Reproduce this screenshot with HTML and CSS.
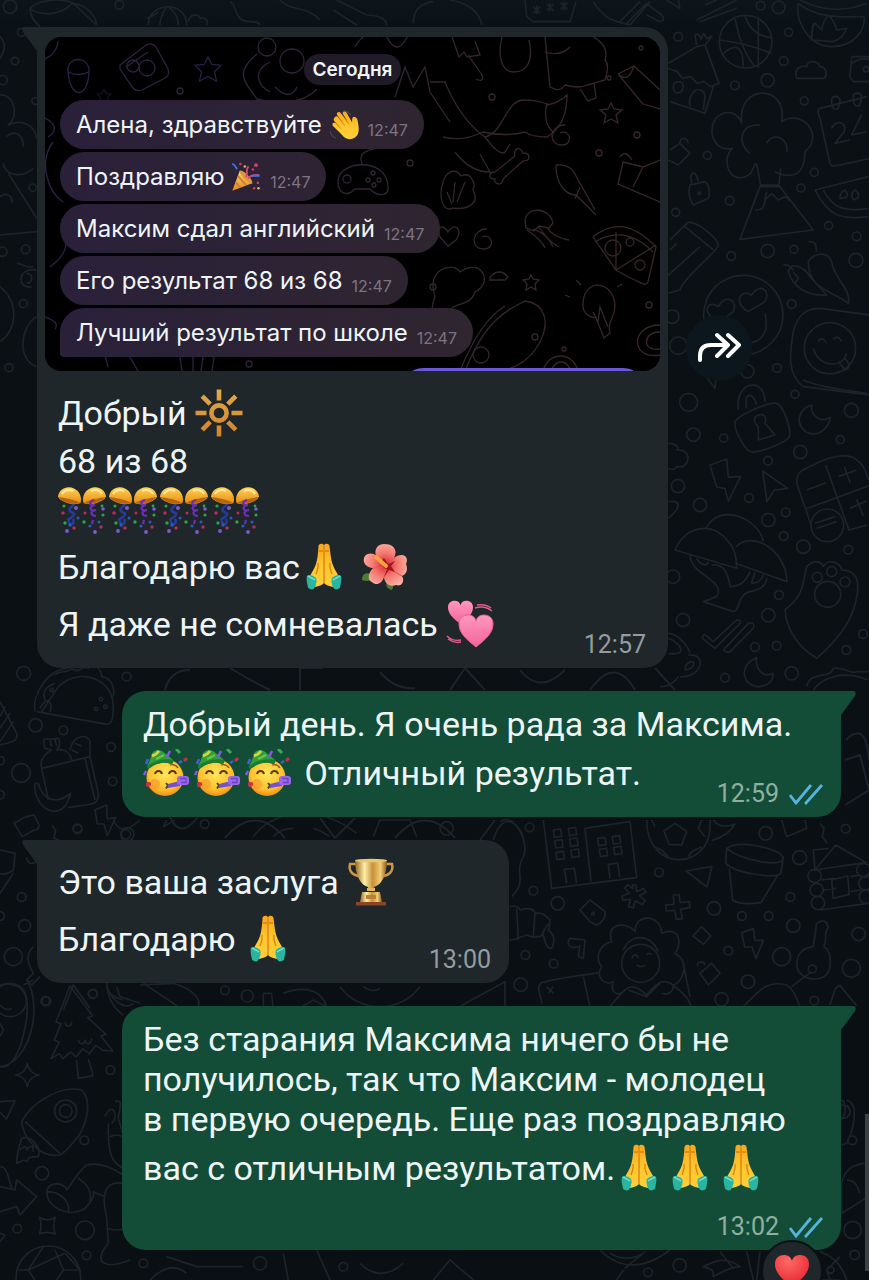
FILE: index.html
```html
<!DOCTYPE html>
<html lang="ru">
<head>
<meta charset="utf-8">
<meta name="viewport" content="width=device-width, initial-scale=1">
<title>Чат</title>
<link rel="stylesheet" href="styles.css">
</head>
<body>
<svg class="defs" aria-hidden="true">
  <defs>
    <linearGradient id="gold" x1="0" y1="0" x2="0" y2="1"><stop offset="0" stop-color="#ffd65c"/><stop offset="1" stop-color="#e8890c"/></linearGradient>
    <linearGradient id="skin" x1="0" y1="0" x2="0" y2="1"><stop offset="0" stop-color="#f9a61c"/><stop offset=".5" stop-color="#fdc62e"/><stop offset="1" stop-color="#ffcf3a"/></linearGradient>
    <radialGradient id="face" cx=".5" cy=".4" r=".6"><stop offset="0" stop-color="#ffe65a"/><stop offset=".7" stop-color="#fdc32f"/><stop offset="1" stop-color="#ee8f1c"/></radialGradient>
    <linearGradient id="cup" x1="0" x2="1"><stop offset="0" stop-color="#9a6420"/><stop offset=".3" stop-color="#fff0a8"/><stop offset=".55" stop-color="#c8913a"/><stop offset=".8" stop-color="#f0cd74"/><stop offset="1" stop-color="#8a5418"/></linearGradient>
    <linearGradient id="sunray" gradientUnits="userSpaceOnUse" x1="0" y1="0" x2="0" y2="48"><stop offset="0" stop-color="#e2ab4c"/><stop offset="1" stop-color="#d08328"/></linearGradient>
    <radialGradient id="petal" cx=".5" cy=".5" r=".55"><stop offset="0" stop-color="#d3222e"/><stop offset=".5" stop-color="#f5766e"/><stop offset="1" stop-color="#fbb0a2"/></radialGradient>
    <linearGradient id="pink" x1="0" y1="0" x2="0" y2="1"><stop offset="0" stop-color="#ff98bd"/><stop offset="1" stop-color="#f4649c"/></linearGradient>
    <radialGradient id="red" cx=".4" cy=".2" r=".8"><stop offset="0" stop-color="#ff6a66"/><stop offset="1" stop-color="#e5242f"/></radialGradient>

    <symbol id="e-sun" viewBox="0 0 48 48">
      <g fill="none" stroke="url(#sunray)" stroke-width="4.6"><circle cx="24" cy="24" r="7.6"/><path d="M24 .5v11M24.01 36.5v11M.5 24h11M36.5 24.01h11M7.2 7.2l8 8M32.8 32.8l8 8M40.8 7.2l-8 8M15.2 32.8l-8 8"/></g>
    </symbol>
    <symbol id="popper-half" viewBox="0 0 24 48">
      <path d="M0 10.500C1 3 9-1 16 2.500c6 3 8 9 6.500 14.500C17 20 3 17 0 10.500z" fill="url(#gold)"/>
      <path d="M.8 11C6 12 17 13.500 22 16.800 17 19.500 4 16.500 .8 11z" fill="#b5650d"/>
      <path d="M4 8c2-4 7-5 11-3" fill="none" stroke="#ffe89a" stroke-width="2"/>
    </symbol>
    <symbol id="e-popper" viewBox="0 0 48 48">
      <path d="M14 17c4 3-5 5-2 8s6 1 3 5-6 1-4 6 6 1 4-3" fill="none" stroke="#243c98" stroke-width="2.600"/>
      <use href="#popper-half" width="24" height="48"/>
      <use href="#popper-half" width="24" height="48" transform="matrix(-1 0 0 1 48 0)"/>
      <path d="M36 14c-6 2-4 6 1 5-7 1-5 7 1 5-7 1-5 6 0 6M35 34l-1 4" fill="none" stroke="#6a2fb8" stroke-width="2.200"/>
      <g fill="#2ea34a"><circle cx="6" cy="20" r="1.600"/><circle cx="7" cy="37" r="1.700"/><circle cx="26" cy="36" r="1.700"/><circle cx="45" cy="29" r="1.600"/><circle cx="44" cy="20" r="1.400"/></g>
      <g fill="#b92a5b"><circle cx="5" cy="27" r="1.800"/><circle cx="16" cy="42" r="1.700"/><circle cx="27" cy="27" r="1.500"/><circle cx="43" cy="41" r="1.700"/></g>
      <g fill="#7d5ad6"><circle cx="9" cy="45" r="1.900"/><circle cx="18" cy="22" r="2"/><circle cx="37" cy="46" r="1.900"/><circle cx="45" cy="23" r="1.800"/></g>
      <g fill="#2f55c8"><circle cx="12" cy="39" r="1.700"/><circle cx="20" cy="32" r="1.500"/><circle cx="32" cy="40" r="1.600"/><circle cx="41" cy="36" r="1.500"/></g>
    </symbol>
    <symbol id="e-pray" viewBox="0 0 48 48">
      <path d="M18.500 3c.5-3 5-3 5.500-.5.500-2.500 5-2.500 5.500.5 1 8 1.500 13 3 18 1.500 4.500 4 8 6 12L33 44c-4-1-7-1.500-9-4-2 2.500-5 3-9 4l-5-11c2-4 4.500-7.500 6-12 1.500-5 2-10 2.500-18z" fill="url(#skin)"/>
      <path d="M24 3v37M19 8h4M25 8h4M18 20c1 5-1 8-2 11M30 20c-1 5 1 8 2 11" fill="none" stroke="#d98010" stroke-width="1.300"/>
      <path d="M8 32.500c1-1.500 8 1 8.500 3.500.5 4-1 8-3 10-1.500 1-5 0-5.500-1.500-.8-4-2-8-1-12z" fill="#2ab5a0"/>
      <path d="M40 32.500c-1-1.500-8 1-8.500 3.500-.5 4 1 8 3 10 1.500 1 5 0 5.500-1.500.8-4 2-8 1-12z" fill="#2ab5a0"/>
      <path d="M8 33c3 2 5 2 7 4M40 33c-3 2-5 2-7 4" fill="none" stroke="#7be0cd" stroke-width="1.500"/>
    </symbol>
    <symbol id="e-flower" viewBox="0 0 48 48">
      <path d="M2 37C2 29 8 29 15 32c0 6-8 7-13 5zM27 39c5-2 8 3 5 8-4-1-7-3-5-8z" fill="#4d7a35"/>
      <path d="M22 20C12 14 14 1 24 1s14 6 10 14C40 9 50 12 46 21c2 5 1 10-4 12 3 5 0 11-6 9-5 2-11 0-12-8-2 7-8 9-12 5-5-2-4-9 1-14C4 24 2 17 5 13c5-5 13-2 17 7z" fill="url(#petal)"/>
      <path d="M33 15l-5 8M42 33l-12-7M24 34l3-8M13 25l11-1M22 20l3 3" stroke="#e25a58" stroke-width="1.200"/>
      <path d="M27 26C21 25 20 18 24 15l4 6 7-3-4 5 4 6-6-2-5 7z" fill="#a31523"/>
      <path d="M26 23L16 14" stroke="#f5a33c" stroke-width="4" stroke-linecap="round"/>
    </symbol>
    <symbol id="heart" viewBox="0 0 36 34"><path d="M18 33C8 25 1 19 1 10 1 4 5 1 10 1c4 0 7 2 8 6 1-4 4-6 8-6 5 0 9 3 9 9 0 9-7 15-17 23z"/></symbol>
    <symbol id="e-hearts" viewBox="0 0 48 48">
      <use href="#heart" x="0" y="0" width="29" height="25" fill="url(#pink)"/>
      <use href="#heart" x="12" y="14" width="36" height="34" fill="url(#pink)" stroke="#ef5e95"/>
      <path d="M29 8c6-2 12-1 17 3M31 5c6-1 10 0 14 3M1 36c4 4 9 5 14 4M2 39c4 3 9 4 13 3" fill="none" stroke="#e6588c" stroke-width="1.400"/>
    </symbol>
    <symbol id="e-party" viewBox="0 0 48 48">
      <circle cx="22" cy="28.500" r="18.500" fill="url(#face)"/>
      <path d="M4 17C7 13 8 6 10 3c4-3 7-2 9-1 4 3 8 6 11 9 1 3-1 4-2 4-8-3-16 0-21 4-2 1-3 0-3-2z" fill="#2f9e3c"/><path d="M4 17c7-5 16-8 26-6 1 3-1 4-2 4-8-3-16 0-21 4-2 1-3 0-3-2z" fill="#1e7a30"/>
      <path d="M9 7c3-1 5-2 7-5" fill="none" stroke="#d9d43c" stroke-width="3"/><path d="M13 10l8-4" stroke="#68c64a" stroke-width="2"/>
      <path d="M12 25c1-4 6-4 7 0M26 25c1-4 6-4 7 0" fill="none" stroke="#5b3514" stroke-width="2"/><path d="M27 16c3-1 6 0 8 3" fill="none" stroke="#8a4f14" stroke-width="1.300"/>
      <circle cx="12" cy="35" r="5" fill="#f58b2a" opacity=".5"/><path d="M23 34l2 2.500-2 3" fill="none" stroke="#4d4a20" stroke-width="2"/>
      <path d="M25 35l12-3v5l-12 2z" fill="#7351d0"/><rect x="34" y="27" width="12" height="9" rx="3" fill="#9a68e8"/><path d="M37 29.500h6v4h-5" fill="none" stroke="#7040c4" stroke-width="1.300"/>
      <path d="M24 8l3-6" stroke="#8557e6" stroke-width="2.600"/><path d="M33 0l4 4" stroke="#34ae4b" stroke-width="3"/>
      <path d="M41 12l3-3M3 35h5M5 33v5" stroke="#c63240" stroke-width="3"/><path d="M3 15l2-5M36 14l3-2" stroke="#3f61d8" stroke-width="2.600"/><path d="M1 26l2-4" stroke="#8557e6" stroke-width="2.400"/>
    </symbol>
    <symbol id="e-trophy" viewBox="0 0 48 48">
      <path d="M9 6H3c-2 8 4 12 11 12M39 6h6c2 8-4 12-11 12" fill="none" stroke="#c99948" stroke-width="2.500"/>
      <path d="M8 2h32c0 14-5 25-13 27l-1 4h-4l-1-4C13 27 8 16 8 2z" fill="url(#cup)"/>
      <ellipse cx="24" cy="2.500" rx="16" ry="1.800" fill="#e8c878"/><rect x="20" y="30" width="8" height="3" fill="#e4b95e"/>
      <path d="M15 34h18l2 10H13z" fill="url(#cup)"/><path d="M19 37h10v4H19z" fill="#b9803a"/><path d="M9 44h30v3.500H9z" fill="#8c4423"/>
    </symbol>
    <symbol id="e-wave" viewBox="0 0 48 48">
      <path d="M9 12c2-3 5-2 7 1l7 8L13 8c-2-4 3-7 6-3l12 15-9-14c-1-4 4-6 6-2l9 16c0-5 0-10 4-9 5 1 5 6 6 13 2 12-1 20-10 22-7 2-12-1-16-6L6 25c-2-4 2-6 5-4l6 6L8 17c-1-2 0-4 1-5z" fill="url(#skin)"/>
      <path d="M16 13l9 12M24 12l8 11M11 21l8 9" stroke="#d8840f" stroke-width="1.500"/>
      <path d="M2 34c1 6 4 9 9 11M24 1c5 1 8 3 11 7" fill="none" stroke="#484852" stroke-width="2"/>
    </symbol>
    <symbol id="e-tada" viewBox="0 0 48 48">
      <path d="M2 46L14 14c9 4 16 12 20 20z" fill="url(#gold)"/><path d="M11 22l13 15M7 32l8 9" stroke="#c67a50" stroke-width="3"/><ellipse cx="24" cy="24" rx="4" ry="14" transform="rotate(-45 24 24)" fill="#d79a38"/>
      <path d="M24 24c4-6-2-10 4-17M27 26c5-5 9-6 18-5" fill="none" stroke="#d44673" stroke-width="3"/><path d="M2 3c6 2 4 5 8 8M34 22h12" fill="none" stroke="#4074dc" stroke-width="3"/>
      <g fill="#d43d63"><circle cx="15" cy="3" r="2"/><circle cx="40" cy="5" r="3"/><circle cx="43" cy="33" r="2"/><circle cx="37" cy="42" r="2"/><circle cx="35" cy="12" r="2"/></g><g fill="#e8b53b"><circle cx="22" cy="7" r="2"/><circle cx="44" cy="42" r="2"/></g>
    </symbol>
    <symbol id="ticks" viewBox="0 0 34 22"><path d="M1 12l6 8L22 2M16 19l1 1L33 2" fill="none" stroke="#55b4dc" stroke-width="2.800"/></symbol>
    <symbol id="star" viewBox="-16 -16 32 32"><path d="M0-13l4 8 10 1-7 7 2 10-9-5-9 5 2-10-7-7 10-1z"/></symbol>
  </defs>
</svg>

<main class="chat">
  <svg class="wallpaper" viewBox="0 0 869 1280" preserveAspectRatio="xMidYMin slice" aria-hidden="true">
    <!-- top left -->
    <g transform="scale(.3333)">
      <path d="M90 25c30-30 100-30 130-15l70 65M90 25c0 30 20 45 30 55M90 25c30 25 100 20 125-15M215 10c30 0 70 25 75 65"/>
      <path d="M445 75c0-70 115-75 115 0M500 20c-10 15-20 35-20 55M505 20c20 15 30 35 30 55M440 55c20-10 30-10 35-20M565 65c5-25 30-25 35-10 20-5 25 10 20 20M690 5c20 10 10 30 30 50s50 0 60 20M840 0c30 35 80 15 120 60M1000 30l70 45M1010 0l90 45c50 0 60 20 60 30M1240 70c0-40 20-60 60-65"/>
      <path d="M0 110c20 20 15 50-5 70M0 285c40-5 60 60 25 90 40-20 80 0 85 40M20 410c30-25 50 0 50 30M10 490c0 30 50 50 90 15M25 520l85 135M0 705l110-10M0 590c20-15 40 0 35 20M50 790c20 0 20 15 50 10M110 810c-60-10-60 60-15 50M80 820c20 0 20 30 0 30M0 860c60 50 50 130 0 165M110 950c-50 30-60 130 0 150"/>
      <circle cx="30" cy="20" r="20"/><circle cx="358" cy="14" r="13"/><circle cx="64" cy="97" r="12"/><circle cx="45" cy="183" r="11"/><circle cx="8" cy="240" r="14"/><circle cx="106" cy="303" r="10"/><circle cx="98" cy="563" r="11"/><circle cx="77" cy="748" r="13"/><circle cx="7" cy="755" r="14"/><circle cx="70" cy="911" r="12"/><circle cx="27" cy="1103" r="12"/>
    </g>
    <!-- top right -->
    <g transform="translate(430) scale(.3333)">
      <path d="M60 0c60 10 90 40 95 75M285 0l5 50 20 15h110l18-60M490 5c30 50 60 60 110 70l60-70M570 65L630 5M590 70l60-60 45 35c15 15-5 25-15 15l-30-15M710 0l40 25-5-25M800 60L920 0M810 65l110-40M825 15L860 0M310 20l20 20m0-20l-20 20m10-24v28M350 12l20 20m0-20l-20 20m10-24v28M392 8l20 20m0-20l-20 20m10-24v28"/>
      <path d="M870 120q80 10 155 40M915 55q20 100 60 145M945 48q20 60 80 65M880 160q60-50 60 40M985 205l0-155"/>
      <circle cx="947" cy="125" r="79"/>
      <path d="M1105 10c-10 50 30 130 100 130s100-50 98-90M1105 10c60 50 150 40 198 40M1110 0q100 50 200 10M1145 120c0-30 5-50 10-50l20 20q5-30 20-45 20 20 25 45l30-5q-10 30-40 40z"/>
      <path d="M715 190l85-50 25-5 42 115-25 10-20-15-20 5-20-20-25 5-15-20-30-10M720 305l105 35 25-80M730 260c0-20 30-20 30 0s-30 30-30 0M780 320c-10-50 40-70 45-30l-5 40M800 135l-5-30c20-10 15 20 20 10l5-15 10 15 15-5-20 25"/>
      <path d="M1100 235c-10-30 15-40 30-35 0-20 35-20 40 0 20 0 25 30 10 35zM1265 170h55M1265 170l-5 60 10 15h50M1265 190q30-20 55-10"/><circle cx="1308" cy="208" r="8"/>
      <path d="M935 370c-15-120 140-120 120-5 60-40 130 40 70 90 0 80-50 80-90 60M935 370c-20-60-100-30-88 35 10 40 40 45 60 40-40 40 0 120 55 75l15-30M960 460c-40-30-30-90 30-85M1010 430c20-40 70-10 60 25M980 490l12 65h55l5-50M990 560h60l100 130-220 28zM1010 575c-10 40 0 55-35 55M1005 600l20-20 20 20 20-10 25 20"/>
      <path d="M1310 290l-140 35c-10 5-5 15 0 30l30 135c5 15 20 5 30 5l90-20M1205 300c0-15 25-15 25 5l-5 20c-15 10-20-5-20-25zM1270 290c0-15 25-15 25 5l-5 20c-15 10-20-5-20-25zM1205 385c15-35 60-10 30 20l-20 25 45-10M1295 345l-30 60 45-10M1155 570l160-40M1155 570c40 80 80 90 160 80M1180 570c30 60 70 65 135 55M1230 595q0-20 15-25 20 25-15 25zM1270 600q-10-20 5-30 25 20-5 30z"/>
      <path d="M720 450l30-20 30 30-35 35-30-15M750 430c0-20 20-20 25 0M780 555l45-10c15 10 15 40 10 50l-45 20c-15-20-15-40-10-60zM785 550c-10-40 15-40 20-5"/><circle cx="808" cy="580" r="4"/>
      <path d="M720 720l50-50c20-15 90 40 95 65 0 20-100 90-115 135l-35 10M765 680l85 70M720 750l20-20M810 740l-100 90"/>
      <circle cx="940" cy="945" r="119"/><path d="M870 965c-60-20-40-70-5-45 20-40 60-20 45 15zM955 935c-50-30-20-70 10-50 20-35 60-20 40 20zM1005 940c15 70-20 95-70 85"/>
      <path d="M1075 815c10-35 50-10 65 15l50 55c-50 5-100-20-115-70zM1135 785c20-30 60-30 70 0 5 50 60 80 50 125-50-40-120-40-120-125zM1060 795c20-5 20 10 30 15M1135 725c30 0 20 15 25 30M1090 815l15 20-10 15"/>
      <path d="M1320 945l-150-20c-50 0-70 30-80 70-10 60-20 130 30 165l200 25"/><circle cx="1200" cy="1045" r="77"/><path d="M1150 1045c15 60 90 60 100 15M1165 1025q10-20 25 5M1210 1020q10-20 25 5M1225 1085l20 25c20-5 10-25 0-35M820 1120l35 45 5-45"/>
      <circle cx="745" cy="110" r="13"/><circle cx="992" cy="17" r="13"/><circle cx="1046" cy="22" r="19"/><circle cx="1076" cy="97" r="12"/><circle cx="1061" cy="183" r="13"/><circle cx="1013" cy="241" r="20"/><circle cx="915" cy="256" r="13"/><circle cx="1123" cy="303" r="12"/><circle cx="832" cy="466" r="12"/><circle cx="899" cy="602" r="13"/><circle cx="1153" cy="517" r="12"/><circle cx="1113" cy="564" r="12"/><circle cx="737" cy="637" r="12"/><circle cx="1196" cy="677" r="12"/><circle cx="1280" cy="709" r="13"/><circle cx="1013" cy="753" r="20"/><circle cx="1092" cy="748" r="12"/><circle cx="904" cy="768" r="13"/><circle cx="1278" cy="781" r="21"/><circle cx="1085" cy="912" r="13"/><circle cx="727" cy="950" r="20"/><circle cx="745" cy="1037" r="26"/><circle cx="952" cy="1114" r="20"/><circle cx="1041" cy="1104" r="13"/>
    </g>
    <!-- right middle -->
    <g transform="translate(660 380) scale(.3333)">
      <path d="M225 130c-5-20 100-65 125-60 20 5 45 80 38 100-10 20-95 50-115 45-20-5-50-65-48-85zM235 90c-10-90 80-100 80-25M260 85c-10-50 20-50 30-10M295 140c-40-35 35-55 20-10l30 35-50 15zM430 0q40 20 190 40M455 75c-60 20-40 85 5 87 30 0 50-30 50-50-30 20-60-10-55-37z"/>
      <path d="M150 255l50-18 5 55 37-3-37 75-10-38-25-5zM308 273l75 52-40 5-22 35zM25 190c25 0 35 15 25 20 50-5 40 60 0 50-5 10-15 10-25 5M25 365c40-5 40 15 0 50"/>
      <path d="M410 310c0-40 20-40 60-60 50-25 100-30 120-10 20 10 30 40 35 60M410 310l45 130M435 388l190-70M497 255l70 195 55-15M440 330l58-22M535 290l55-20M553 260l18 50M570 385l50-22M590 358l20 50M465 430l60-20M470 445l60-20"/><circle cx="502" cy="436" r="49"/>
      <path d="M45 510c30-70 110-90 160-25 20 20 25 50 25 80zM138 445c40-80 160-30 172 40M228 500c50-50 150 10 153 105l-155-55M90 525c0 60 110 75 80 125l-40 15 90 30c20 0 10-50 50-60 30-5 50-20 50-40M110 535c10 20 30 25 35 10M155 555c40-5 50 30 55 65 30 0 50-20 60-45M275 610l10-35M275 610c20 0 30-10 35-25M130 765c10-5 15 10 30 20l70-65c20 0 10 15-5 25l-60 60-38-30zM195 805l70-75c20-5 20 10 10 20l-65 65c-15 5-20-5-15-10z"/>
      <path d="M440 560c20-20 40-20 50 0 15-25 50-15 55 10 60 0 55 60 35 120-20 60-70 110-110 145-50-30-90-80-95-145 60-50 50-70 65-130z"/><circle cx="503" cy="643" r="39"/><circle cx="472" cy="592" r="15"/><circle cx="515" cy="575" r="15"/><circle cx="555" cy="606" r="15"/>
      <path d="M25 760c30 0 60 40 65 60M25 820c60 10 40-30 0-45M85 825c60-5 40 70-25 65M75 870c0-20 10-25 25-25 5 10-5 25-25 25zM0 920c30 0 50-20 55-30M290 833c-60 25-40 90 10 87 30-5 40-20 40-40-30 15-55-10-50-47zM440 920c10-50 70-20 80-55 40-5 50 20 70 10l40 0M460 930c30-40 90-60 165-30"/>
      <circle cx="86" cy="67" r="27"/><circle cx="100" cy="164" r="20"/><circle cx="191" cy="174" r="12"/><circle cx="405" cy="43" r="12"/><circle cx="574" cy="91" r="21"/><circle cx="541" cy="179" r="12"/><circle cx="421" cy="216" r="20"/><circle cx="324" cy="242" r="13"/><circle cx="54" cy="318" r="20"/><circle cx="120" cy="375" r="20"/><circle cx="267" cy="354" r="13"/><circle cx="325" cy="420" r="20"/><circle cx="377" cy="397" r="13"/><circle cx="371" cy="468" r="13"/><circle cx="430" cy="500" r="20"/><circle cx="565" cy="509" r="13"/><circle cx="39" cy="590" r="20"/><circle cx="357" cy="645" r="13"/><circle cx="69" cy="720" r="20"/><circle cx="325" cy="706" r="20"/><circle cx="285" cy="801" r="13"/><circle cx="350" cy="797" r="13"/><circle cx="609" cy="762" r="13"/><circle cx="559" cy="810" r="13"/><circle cx="395" cy="880" r="20"/><circle cx="195" cy="893" r="13"/>
    </g>
    <!-- between the sent bubbles -->
    <g transform="translate(500 820) scale(.3333)">
      <path d="M130 0l25 205 255-32L390 5l-135 20 18 160M200 190l-7-42 30-3 7 45M330 175l-5-42 28-4 6 42M160 30l22-3 3 22-22 3zM205 25l22-3 3 22-22 3zM164 62l22-3 3 22-22 3zM209 57l22-3 3 22-22 3zM168 97l22-3 3 22-22 3zM213 90l22-3 3 22-22 3zM293 55l22-3 3 22-22 3zM337 50l22-3 3 22-22 3zM298 88l22-3 3 22-22 3zM341 82l22-3 3 22-22 3zM0 5c40-30 90 60 70 105-30 50 15 70-35 120"/>
      <path d="M440 0c0 160 190 150 190 20l0-20M525 10l35 25-15 40-38-2-15-40zM455 0l10 20M460 80l25 10 20 20M565 110l10-15 30-15M605 0l-10 25 20 25M640 0q20 30 65 12-20 35-70 50"/>
      <path d="M680 85c40-30 170 5 170 30 0 30-130 5-170-30zM680 85l-3 45c30 30 140 45 165 32l8-47M688 145l10 95c20 15 70 10 85 8l50-82M845 0l15 50 60-25-5-25M960 10l12 15-5 25 15 20M940 90l5 60 62-75 95 55M940 90l45-5M945 150l150-22M960 270l145-20M965 180l40-5M968 210l40-5M995 180l48-12 5 55-48 12zM1050 170l30-5M1052 215l30-5"/>
      <circle cx="944" cy="168" r="20"/><circle cx="950" cy="210" r="20"/><circle cx="954" cy="249" r="20"/><circle cx="1090" cy="150" r="20"/><circle cx="1096" cy="190" r="20"/><circle cx="1098" cy="230" r="20"/>
      <path d="M558 153l78-14-15 62zM398 195l10 0 2 20 20-10 8 12-20 10 18 15-10 12-20-12-6 22-14-4 5-22-22 3-3-13 22-8-14-16 10-10 14 12zM520 225l18 0 2 22 28-2 2 18-28 5 5 28-18 2-5-27-25 2-2-18 25-2zM240 270l30-30 45 35c5 15-10 35-25 40l-20-10zM605 320l28 28-22 25-32-25zM725 338l35-12 5 35 25 0-22 55-12-35-22 0zM600 460l35-30 25 30-35 35zM595 440c-10-15 15-20 20-5"/><circle cx="279" cy="281" r="4"/>
      <path d="M30 260c20-5 25 0 30 10 30-10 40 0 48 10 20-5 30 10 42 20 0 20-5 30-5 30 20 15 20 35 10 55-20 0-20-25-25-40-20 10-40 5-50 0-20 5-30 15-50 15M50 265l5 95M105 280l-5 70M145 310l-20 35M255 360l-45-5c-10 15-5 25 10 28l15-3M255 360l-5 55-15-5 5-35"/>
      <path d="M335 365c-20-60 50-60 70-30 0-60 80-50 80 5 60-25 60 40 40 60 50 30 20 90-5 95 0 25-20 30-35 25M335 365c-40 10-50 50-30 75-20 30 10 60 35 45-10 30 10 45 30 30M370 390c20-50 80-50 105 5M330 560c50-60 60-80 110-35 40-50 60-50 90-20 30 20 40 40 45 60M385 510l55 20 40-40M550 430l20 100M295 458c-60 10-120 15-170 30-20 10 0 40 0 65M250 470l20 90M140 500l20 20m0-20l-15 20M410 435q15 10 25 0M395 415q10-20 20-2M440 405q10-10 15 0"/><circle cx="422" cy="430" r="57"/>
      <path d="M940 380l10-70c20-15 30-5 35 10l-8 20 0 20-5 20c30 20 20 80 0 90-30 15-70 5-80-25-5-40 10-60 48-65zM935 455l-60 45M730 560c50-50 70-80 130-65 20 10 35 50 40 65M990 555c10-30 15-60 30-58l50 60"/><circle cx="937" cy="447" r="12"/>
      <circle cx="89" cy="22" r="13"/><circle cx="797" cy="40" r="20"/><circle cx="1037" cy="26" r="13"/><circle cx="477" cy="157" r="13"/><circle cx="100" cy="212" r="13"/><circle cx="173" cy="250" r="20"/><circle cx="642" cy="265" r="20"/><circle cx="871" cy="231" r="13"/><circle cx="726" cy="288" r="13"/><circle cx="806" cy="288" r="13"/><circle cx="880" cy="317" r="20"/><circle cx="1076" cy="342" r="20"/><circle cx="685" cy="392" r="13"/><circle cx="845" cy="410" r="27"/><circle cx="1054" cy="445" r="27"/><circle cx="76" cy="405" r="13"/><circle cx="161" cy="431" r="13"/><circle cx="62" cy="494" r="20"/><circle cx="744" cy="485" r="20"/><circle cx="899" cy="113" r="21"/><circle cx="665" cy="538" r="20"/><circle cx="943" cy="542" r="13"/>
    </g>
    <!-- left middle -->
    <g transform="translate(0 660) scale(.3333)">
      <path d="M105 155c-10-50 40-130 100-130M110 155l210 38c20 0 20-30 20-60-10-100-140-110-180-30l-35 52M165 45c20-20 35 0 50-20 20 20 30-10 50 0 10-20 40 0 40 25 30 5 40 30 35 60M120 145c20-40 40-20 30 10M135 120c-10-30 5-40 30-50M0 125l50 95c5 20-5 25-50 35M0 170l15-30M0 205l30-45M0 245l40-60"/>
      <circle cx="155" cy="90" r="5"/><circle cx="303" cy="118" r="5"/><circle cx="288" cy="146" r="5"/><circle cx="316" cy="140" r="5"/>
      <path d="M125 325c-10-30 20-50 30-55l-20-5c-10-30 0-30 15-28l25-2c10 20 0 30-5 35 30-5 40 10 45 30M125 325l145-35 25 110c0 30-10 30-40 35l-50 8M125 325l20 95M210 270c10-50 60-50 60-20v40M215 270l20 10M225 250l20 8M255 295l30 125M105 370c-10 70 80 130 105 35 0 0 5-10-5 0-40 30-80 10-90-35zM150 240l5 20M165 238l5 20M42 490l35-20 5 0 20-5 15 30c0 10-5 15-15 15l-35 20zM155 495l12 15-5 25 15 5M285 450l35-15 2 42 25-5-25 55-10-35-20 0z"/>
      <circle cx="71" cy="40" r="21"/><circle cx="107" cy="196" r="20"/><circle cx="190" cy="211" r="13"/><circle cx="333" cy="261" r="13"/><circle cx="63" cy="339" r="28"/><circle cx="0" cy="302" r="13"/><circle cx="338" cy="364" r="13"/><circle cx="0" cy="404" r="13"/><circle cx="233" cy="507" r="13"/><circle cx="380" cy="50" r="13"/><circle cx="378" cy="523" r="14"/>
    </g>
    <g transform="translate(0 820) scale(.3333)">
      <path d="M0 90l45 10-5 50q-20 15-40 12M40 160L0 220M80 110c0 20 15 25 30 15M100 380c-30 30-10 60 0 80l-20 20 15 15 25-25M190 570l30-75 50 70M320 500c20 50 60 70 80 50M350 500l10 30 60 20M420 495l100-5c130 40 70 120 0 60l-90-60M340 0c10 20 25 50 80-0M500 0l-10 20 35-20M760 50c50-70 180-110 310-10M820 50q20-25 60-25M940 25q20 5 50 25M1120 50l20-50h90l20 50M1480 60c30-100 80-40 90-10M790 570v-50h25l5 50M850 520c50-20 110-20 130 40l-40-20-50 30M1020 500c60 80 180 80 240 0M1090 500q30 20 50 5M1370 565l145-80v80"/>
      <circle cx="65" cy="231" r="13"/><circle cx="74" cy="317" r="18"/><circle cx="0" cy="288" r="13"/><circle cx="40" cy="410" r="27"/><circle cx="30" cy="540" r="50"/><circle cx="278" cy="522" r="13"/><circle cx="136" cy="543" r="13"/><circle cx="675" cy="511" r="13"/><circle cx="742" cy="528" r="18"/><circle cx="232" cy="25" r="13"/><circle cx="382" cy="43" r="20"/><circle cx="614" cy="12" r="13"/><circle cx="1340" cy="25" r="20"/>
    </g>
    <!-- lower left -->
    <g transform="translate(0 980) scale(.3333)">
      <path d="M0 15c100-20 90 80 65 170-20 60-40 80-65 75M80 0c50 80 10 250-80 260M70 15l30-15M0 75q20 20 35 10M0 130l10 20-10 20M210 18l68 90-15 5 55 50-15 5 35 45-30-2-20-15-20 25-20-15-20 25-15-15-25 20-10-15-25 15 25-50-15-5 20-50-15-5zM230 240l5 55 45-8-15-50M195 125c0 20 20 15 20 0M235 180c5 20 20 10 20 0 5 20 20 10 20-5M82 250q5 30 35 35-30 5-35 35-5-30-35-35 30-5 35-35zM0 365l45-3-25 55-20-20"/>
      <path d="M65 425c30-60 120-110 180-95 30 30 20 90-10 140-20 20-30 40-55 55-60 10-110-50-115-100zM75 425l105 95M65 475c30-10 60 30 50 55-20 0-30 0-35 15-10-10-15 0-30 5 0-30 10-60 15-75zM60 510q20-20 20 0 20-25 20 5"/><circle cx="197" cy="393" r="33"/><circle cx="197" cy="393" r="19"/>
      <path d="M0 620l45 10 5-30 60 50-50 55-10-25-50 15M0 560c20 0 25 30 35 65M140 635c10-40 60-20 60-5 10-10 30-50 60-75 40-10 80 10 110 30M140 635c0 50 70 80 115 50 20-20 30-40 25-50l35 15M235 595c30 20 40 40 35 70M140 635c50 0 70 35 65 65M345 365c30-10 10 30 10 50l15 50M315 410c20-50 45 0 20 20M325 430c0 60-5 130 65 140M330 470q20-10 40 0M370 610c-60-10-65 40-50 100l5 80c-50 60-10 80 65 50M320 745q30 10 60 0M118 712q25 15 48 0-10 25 0 50-25-10-48 0 10-25 0-50zM0 760l15 5-15 20"/>
      <circle cx="145" cy="895" r="97"/><path d="M50 870l35 0 45-70M85 870l110-50M85 870l20 30M195 820l45 50-50 0-20 30M190 870l-25-60"/>
      <circle cx="139" cy="63" r="13"/><circle cx="279" cy="41" r="13"/><circle cx="331" cy="270" r="13"/><circle cx="253" cy="481" r="13"/><circle cx="126" cy="580" r="20"/><circle cx="255" cy="751" r="28"/><circle cx="52" cy="746" r="13"/><circle cx="260" cy="826" r="13"/><path d="M320 0q0 70 50 105M370 60q-40-10-45-30M500 830l90 30 140 0M450 900q60-60 110-20M850 820l15 80M950 810l40 90M1080 850q60 60 130 0M1300 900l50-60 70 60"/><circle cx="430" cy="850" r="13"/><circle cx="780" cy="850" r="20"/><circle cx="1030" cy="860" r="13"/>
    </g>
    <!-- lower right -->
    <g transform="translate(600 1100) scale(.3333)">
      <path d="M740 0c40 10 20 90 0 130l-15 5M720 60c20-10 20-50 5-60M805 190c-50 0-70 20-80 60l0 90 80-50M740 240c20 0 30 10 40 40M0 450c60 60 130 60 210 0M30 460q50 30 100 0M70 510l-20 30M75 505c20-20 40-30 60-50M310 500c40-20 70-30 110 0-30 0-60 20-80 30 0-20 0-20-30-30zM360 455l40 50M440 455l20 85M480 455l-10 85M660 455q60 20 80 85M690 540l-10-30 40-40M620 540h100"/>
      <circle cx="730" cy="35" r="20"/><circle cx="757" cy="121" r="13"/><circle cx="758" cy="390" r="26"/><circle cx="764" cy="465" r="14"/><circle cx="239" cy="496" r="20"/><circle cx="144" cy="517" r="13"/><circle cx="692" cy="510" r="10"/>
    </g>
    <!-- strips between bubbles -->
    <path d="M165 690q5-20 25-20M230 668q25 15 40 22M300 690v-22h22M380 672q15 18 35 16M450 690l15-22 20 22M520 670q20 25 45 0M590 690q25-35 45 0M655 668l20 22M846 740q20-20 23 20M845 760l15-5 9 35-24 15"/>
    <path d="M170 817q10 23 28 0M225 838q30-35 60 0M320 818l15 20 20-20M395 838q30-35 60 0M480 840l15-20"/>
  </svg>

  <section class="row row-in">
    <article class="bubble bubble-in bubble-media">
      <svg class="tail" viewBox="0 0 32 24" aria-hidden="true"><path d="M3 0H32V24H15L1 5Q-1 0 3 0z" fill="#1f272a"/></svg>
      <div class="shot">
        <svg class="shot-bg" viewBox="0 0 615 334" preserveAspectRatio="xMidYMid slice" aria-hidden="true">
          <defs><linearGradient id="ink" gradientUnits="userSpaceOnUse" x1="0" y1="180" x2="615" y2="120"><stop offset="0" stop-color="#2b2149"/><stop offset=".45" stop-color="#302435"/><stop offset="1" stop-color="#382724"/></linearGradient></defs>
          <g fill="none" stroke="url(#ink)" stroke-width="1.300">
            <path d="M0 22q12-5 13-18M23 33c0-14 20-14 21 0 0 30-20 30-21 0zM23 35q10 5 21 0M75 28l26-20q6-3 10 2l12 22q2 6-3 9L97 53q-6 2-9-2L75 32zM81 30l22-15"/><circle cx="88" cy="29" r="6"/><circle cx="102" cy="31" r="8"/>
            <use href="#star" x="148" y="17" width="30" height="30"/><use href="#star" x="51" y="51" width="16" height="16"/>
            <circle cx="222" cy="10" r="9"/><circle cx="247" cy="24" r="12"/><path d="M212 17c-25 20-10 30 0 45q40 10 60-10M225 25c-20 10-10 25 0 30M230 50q15 15 22 0M310 10q10-18 22-10M342 0q10 20 20 0M350 60l10-30 8 20 12-20 5 25 20 30"/>
            <path d="M3 100q15-10-5-20M8 105c-15 20-5 50 10 60M5 230q20-15 15-30M0 280q15 5 10 12M125 320l12-20h35l-5 34M63 330l-5-20 20-2 15 26M135 320l2 14M148 320l0 14M158 320l-2 14"/>
            <path d="M293 144c0-20 48-25 50 5 2 12-12 10-18 3h-15c-8 8-17 5-17-8zM317 127q-5-12 12-15"/><circle cx="302" cy="142" r="4"/><circle cx="328" cy="136" r="2"/><circle cx="334" cy="143" r="2"/><circle cx="323" cy="143" r="2"/><circle cx="329" cy="148" r="2"/>
            <path d="M407 0l7 20 5-5 3 5 13-2-5-14M423 18l14 20q2 8-6 4M457 0c-5 20 0 35 12 35s20-10 15-32M500 0l5 50q10 6 15-2 15 4 22 0l18-5q5-15 0-20 5-15-15-25M535 52l8 12 8-3-2-15M500 15q15 5 25-5"/>
            <path d="M385 45h15c10 25 25 45 40 55 20-5 20-38 40-37 15 0 25 5 22 5q12-2 20-10 0 30-20 42-15 0-22-5-20 5-42 0-20 10-40 5M410 115q15 20 35 20l-10-18M440 100q15 20 20 15l5-8M502 66q-5 20 7 30"/>
            <path d="M573 37l16-8 26 24M573 37l25 30 17 5M573 37q10 10 16-8M450 135l20-16c-2-8 5-10 8-3 8 0 8 8 0 8l-20 18c0 8-10 5-8 0-8 0-6-7 0-7zM511 128c20-2 20 15 25 20l14 25M511 128c0 20 10 30 20 30l20 20M535 150l-5 12"/>
            <path d="M398 145c3-10 12-15 18-6 10-5 15 8 12 14 8 15-8 20-20 18-10 5-15-10-10-26zM402 155l5 12M410 145l-2 20M420 145l-8 20"/><path d="M578 125l20 5 17-7M578 125l-5 22 42 18M598 130l-10 20M575 120q5-8 12 3"/>
            <path d="M566 66l3 6 8 1-6 5 2 8-7-4-7 4 2-8-6-5 8-1zM486 238l2 4 6 1-4 4 1 6-5-3-5 3 1-6-4-4 6-1z"/>
            <path d="M480 183c3-15 25-12 28 3l-4 5-10-2-5 5-8-3zM482 193q15 10 18 18M488 192q15 5 20 18M494 190q10 15 20 20M502 190q5 10 22 13"/><path d="M548 200q30-25 63 10l-8 35c-3 5-5 1-20-5l-12-7-23-33M550 205q30-18 58 10M571 233v-38M571 233l40-25"/><circle cx="568" cy="211" r="8"/><circle cx="585" cy="205" r="4"/><circle cx="595" cy="228" r="5"/>
            <path d="M390 260c-10-30 20-35 25-25 20-15 35 10 15 20-5 15-20 10-25 18-5 12-25 10-15-13zM445 240q10-10 18 0l-3 3h-15zM395 200c-5-12 5-12 8-5 8-12 15 0 8 8l-8 6zM538 268c0-28 30-25 32 0 0 15-8 15-5 28l-6 5-8-20q-13-2-13-13zM548 275l5 10 2-15 8 20M525 260l-5-2M536 248l-5-5M572 250l5-3"/>
            <path d="M420 334c20-50 40-60 60-70 40 5 15 70-30 70M415 334q20-50 45-65"/><circle cx="436" cy="318" r="8"/><path d="M498 334c5-20 30-20 35 0M506 334c5-12 15-12 20 0M615 288c-30 0-30 35 0 30M615 295c-18 0-18 20 0 17M520 88c-15 0-18 20-3 20 12 0 8-17-2-12M442 192c-15 0-18 20-3 20 12 0 8-17-2-12"/>
            <circle cx="135" cy="54" r="3"/><circle cx="365" cy="126" r="3"/><circle cx="447" cy="60" r="3"/><circle cx="554" cy="116" r="3"/><circle cx="592" cy="98" r="3"/><circle cx="564" cy="41" r="2"/><circle cx="596" cy="11" r="2"/><circle cx="490" cy="300" r="3"/><circle cx="519" cy="312" r="2"/><circle cx="604" cy="268" r="3"/><circle cx="204" cy="327" r="3"/><circle cx="388" cy="250" r="3"/>
          </g>
          <path d="M367 334q5-3 12-3H577q8 0 12 3z" fill="#6c57d6"/>
        </svg>
        <div class="shot-list">
          <span class="day">Сегодня</span>
          <p class="pill">Алена, здравствуйте <svg class="mini" role="img" aria-label="👋"><use href="#e-wave"/></svg><time>12:47</time></p>
          <p class="pill">Поздравляю <svg class="mini" role="img" aria-label="🎉"><use href="#e-tada"/></svg><time>12:47</time></p>
          <p class="pill">Максим сдал английский<time>12:47</time></p>
          <p class="pill">Его результат 68 из 68<time>12:47</time></p>
          <p class="pill">Лучший результат по школе<time>12:47</time></p>
        </div>
      </div>
      <div class="body">
        <div class="text">
          <p class="line tall">Добрый <svg class="emoji"><use href="#e-sun"/></svg></p>
          <p class="line">68 из 68</p>
          <p class="line tall"><svg class="emoji"><use href="#e-popper"/></svg><svg class="emoji"><use href="#e-popper"/></svg><svg class="emoji"><use href="#e-popper"/></svg><svg class="emoji"><use href="#e-popper"/></svg></p>
          <p class="line tall">Благодарю вас<svg class="emoji"><use href="#e-pray"/></svg> <svg class="emoji spaced"><use href="#e-flower"/></svg></p>
          <p class="line tall">Я даже не сомневалась <svg class="emoji"><use href="#e-hearts"/></svg></p>
        </div>
        <div class="meta"><time>12:57</time></div>
      </div>
    </article>
    <button class="forward" type="button" aria-label="Переслать">
      <svg viewBox="0 0 44 32" aria-hidden="true"><path d="M3 28v-4q0-11 11-11h17M20 3l11 10-11 11M31 3l11 10-11 11" fill="none" stroke="#fff" stroke-width="4" stroke-linecap="round" stroke-linejoin="round"/></svg>
    </button>
  </section>

  <section class="row row-out">
    <article class="bubble bubble-out">
      <svg class="tail" viewBox="0 0 32 24" aria-hidden="true"><path d="M3 0H32V24H15L1 5Q-1 0 3 0z" fill="#144d37"/></svg>
      <div class="body">
        <div class="text">
          <p class="line">Добрый день. Я очень рада за Максима.</p>
          <p class="line tall"><svg class="emoji"><use href="#e-party"/></svg><svg class="emoji"><use href="#e-party"/></svg><svg class="emoji"><use href="#e-party"/></svg> Отличный результат.</p>
        </div>
        <div class="meta"><time>12:59</time><svg class="ticks" role="img" aria-label="Прочитано"><use href="#ticks"/></svg></div>
      </div>
    </article>
  </section>

  <section class="row row-in">
    <article class="bubble bubble-in bubble-short">
      <svg class="tail" viewBox="0 0 32 24" aria-hidden="true"><path d="M3 0H32V24H15L1 5Q-1 0 3 0z" fill="#1f272a"/></svg>
      <div class="body">
        <div class="text">
          <p class="line tall">Это ваша заслуга <svg class="emoji"><use href="#e-trophy"/></svg></p>
          <p class="line tall">Благодарю <svg class="emoji"><use href="#e-pray"/></svg></p>
        </div>
        <div class="meta"><time>13:00</time></div>
      </div>
    </article>
  </section>

  <section class="row row-out">
    <article class="bubble bubble-out">
      <svg class="tail" viewBox="0 0 32 24" aria-hidden="true"><path d="M3 0H32V24H15L1 5Q-1 0 3 0z" fill="#144d37"/></svg>
      <div class="body body-stacked">
        <div class="text">
          <p class="line">Без старания Максима ничего бы не</p>
          <p class="line">получилось, так что Максим - молодец</p>
          <p class="line">в первую очередь. Еще раз поздравляю</p>
          <p class="line tall">вас с отличным результатом.<svg class="emoji"><use href="#e-pray"/></svg><svg class="emoji"><use href="#e-pray"/></svg><svg class="emoji"><use href="#e-pray"/></svg></p>
        </div>
        <div class="meta"><time>13:02</time><svg class="ticks" role="img" aria-label="Прочитано"><use href="#ticks"/></svg></div>
      </div>
      <button class="reaction" type="button" aria-label="Реакция"><svg viewBox="0 0 36 34" aria-hidden="true"><use href="#heart" fill="url(#red)"/></svg></button>
    </article>
  </section>
  <div class="scrollbar"></div>
</main>
</body>
</html>
```
FILE: styles.css
```css
* {
  box-sizing: border-box;
}

body {
  margin: 0;
  background: #0a1014;
  color: #eef5f7;
  font-family: Roboto, "Noto Sans", sans-serif;
  font-size: 34px;
  line-height: 40px;
}

p {
  margin: 0;
}

button {
  padding: 0;
  border: 0;
}

.defs {
  position: absolute;
  width: 0;
  height: 0;
}

.chat {
  position: relative;
  display: flex;
  flex-direction: column;
  gap: 23px;
  min-height: 100vh;
  padding: 27px 28px 29px 37px;
  overflow: hidden;
  background: linear-gradient(#0c151b, #0a1014 40px, #090f13);
}

.wallpaper {
  position: absolute;
  inset: 0;
  width: 100%;
  height: 100%;
  fill: none;
  stroke: #1d2429;
  stroke-width: 5;
  stroke-linejoin: round;
}

.wallpaper > path {
  stroke-width: 2;
}

.row {
  position: relative;
  display: flex;
  align-items: center;
  gap: 18px;
}

.row-out {
  justify-content: flex-end;
}

.bubble {
  position: relative;
  border-radius: 24px;
}

.bubble-in {
  background: #1f272a;
  border-top-left-radius: 0;
}

.bubble-out {
  width: 719px;
  max-width: 100%;
  background: #144d37;
  border-top-right-radius: 0;
}

.bubble-media {
  width: 631px;
  max-width: 100%;
  padding: 10px 8px 0;
}

.bubble-short {
  width: 472px;
  max-width: 100%;
}

.tail {
  position: absolute;
  top: 0;
  left: -15px;
  width: 32px;
  height: 24px;
}

.bubble-out .tail {
  right: -15px;
  left: auto;
  transform: scaleX(-1);
}

.body {
  display: grid;
  padding: 13px 18px 8px 21px;
}

.bubble-media .body {
  padding-right: 14px;
  padding-left: 13px;
}

.text {
  grid-area: 1 / 1;
  padding-bottom: 8px;
}

.meta {
  grid-area: 1 / 1;
  place-self: end;
  display: flex;
  align-items: center;
  gap: 10px;
  color: #949c9f;
  font-size: 25px;
  line-height: 30px;
}

.bubble-out .meta {
  color: #8fb0a0;
}

.body-stacked .meta {
  grid-area: 2 / 1;
  margin-top: 8px;
}

.line {
  display: flex;
  align-items: center;
  height: 40px;
  white-space: pre;
}

.tall {
  height: 57px;
}

.emoji {
  flex: none;
  width: 48px;
  height: 48px;
  margin-right: 3px;
}

.spaced {
  margin-left: 9px;
}

.ticks {
  width: 34px;
  height: 22px;
}

.shot {
  position: relative;
  overflow: hidden;
  border-radius: 16px;
  background: #000;
  font-family: Inter, "Noto Sans", sans-serif;
}

.shot-bg {
  position: absolute;
  inset: 0;
  width: 100%;
  height: 100%;
}

.shot-list {
  position: relative;
  display: flex;
  flex-direction: column;
  align-items: flex-start;
  gap: 3px;
  padding: 17px 15px 14px;
}

.day {
  align-self: center;
  margin-bottom: 12px;
  padding: 0 9px;
  border-radius: 16px;
  background: #211b28;
  font-size: 19px;
  font-weight: 600;
  line-height: 31px;
}

.pill {
  display: flex;
  align-items: center;
  padding: 0 16px;
  border-radius: 25px;
  background: linear-gradient(90deg, #2a203a, #30262f 440px);
  font-size: 24px;
  line-height: 49px;
  white-space: pre;
}

.pill:last-child {
  border-bottom-left-radius: 4px;
}

.pill time {
  padding-top: 12px;
  margin-left: 9px;
  color: #7d7482;
  font-size: 16px;
  line-height: 37px;
}

.mini {
  width: 30px;
  height: 30px;
}

.forward {
  display: grid;
  flex: none;
  place-items: center;
  width: 66px;
  height: 66px;
  border-radius: 50%;
  background: #0c171d;
}

.forward svg {
  width: 44px;
  height: 32px;
}

.reaction {
  position: absolute;
  right: 18px;
  bottom: -52px;
  display: grid;
  place-items: center;
  width: 62px;
  height: 62px;
  border: 2px solid #0a1014;
  border-radius: 50%;
  background: #1f272a;
}

.reaction svg {
  width: 38px;
  height: 34px;
}

.scrollbar {
  position: absolute;
  right: 0;
  bottom: 9px;
  width: 4px;
  height: 157px;
  background: #3c4145;
}
```
